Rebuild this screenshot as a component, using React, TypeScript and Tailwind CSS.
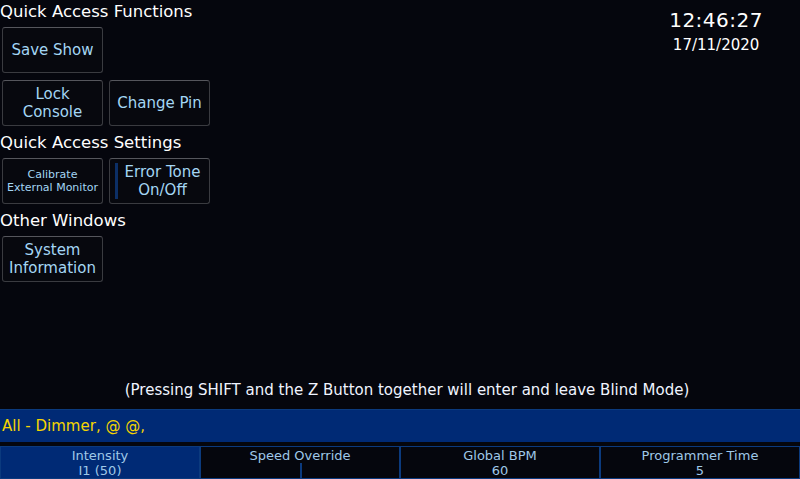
import React from "react";

const font = { fontFamily: '"DejaVu Sans", Verdana, sans-serif' };

function Btn({ children, small, bar }: { children: React.ReactNode; small?: boolean; bar?: boolean }) {
  return (
    <div className={`relative w-[101px] h-[46px] rounded-[3px] border border-[#3a3b40] border-t-[#55565c] bg-[#07080e] flex items-center justify-center text-center text-[#a4d6f4] leading-[18px] ${bar ? "pl-[6px]" : ""}`}>
      {bar && <div className="absolute left-[5px] top-[4px] bottom-[4px] w-[3px] bg-[#0c2f66]" />}
      <span className={small ? "text-[11px] leading-[13px]" : "text-[15px]"}>{children}</span>
    </div>
  );
}

function Cell({ label, value, active, slider }: { label: string; value?: string; active?: boolean; slider?: boolean }) {
  return (
    <div className={`relative flex-1 h-[33px] border border-[#0b3a7e] flex flex-col items-center text-[13px] leading-[15px] text-[#9fc8e8] pt-[1px] ${active ? "bg-[#002a75]" : "bg-[#05060d]"}`}>
      <div>{label}</div>
      <div>{value}</div>
      {slider && <div className="absolute left-[99px] bottom-0 w-[2px] h-[15px] bg-[#0b3a7e]" />}
    </div>
  );
}

export default function App() {
  return (
    <div className="w-[800px] h-[479px] bg-[#05060d] text-white flex flex-col overflow-hidden" style={font}>
      <div className="flex-1 flex relative">
        <div className="flex flex-col pl-[2px]">
          <div className="text-[16.5px] leading-[24px] -ml-[2px]">Quick Access Functions</div>
          <div className="flex flex-col gap-[7px] mt-[3px]">
            <div className="flex gap-[6px]"><Btn>Save Show</Btn></div>
            <div className="flex gap-[6px]">
              <Btn>Lock<br />Console</Btn>
              <Btn>Change Pin</Btn>
            </div>
          </div>
          <div className="text-[16.5px] leading-[24px] -ml-[2px] mt-[5px]">Quick Access Settings</div>
          <div className="flex gap-[6px] mt-[3px]">
            <Btn small>Calibrate<br />External Monitor</Btn>
            <Btn bar>Error Tone<br />On/Off</Btn>
          </div>
          <div className="text-[16.5px] leading-[24px] -ml-[2px] mt-[5px]">Other Windows</div>
          <div className="flex gap-[6px] mt-[3px]">
            <Btn>System<br />Information</Btn>
          </div>
        </div>
        <div className="absolute right-[37px] top-[8px] flex flex-col items-center">
          <div className="text-[20px] leading-[24px] tracking-[0.5px]">12:46:27</div>
          <div className="text-[15px] leading-[20px] mt-[3px]">17/11/2020</div>
        </div>
        <div className="absolute left-0 right-0 bottom-[10px] pl-[14px] text-center text-[15px] leading-[18px] text-[#f0f4ff]">
          (Pressing SHIFT and the Z Button together will enter and leave Blind Mode)
        </div>
      </div>
      <div className="h-[33px] bg-[#002a75] border-t border-[#0b3a7e] flex items-center px-[2px] text-[15px] text-[#f5d400]">
        All - Dimmer, @ @,
      </div>
      <div className="h-[4px]" />
      <div className="flex">
        <Cell label="Intensity" value="I1 (50)" active />
        <Cell label="Speed Override" slider />
        <Cell label="Global BPM" value="60" />
        <Cell label="Programmer Time" value="5" />
      </div>
    </div>
  );
}
